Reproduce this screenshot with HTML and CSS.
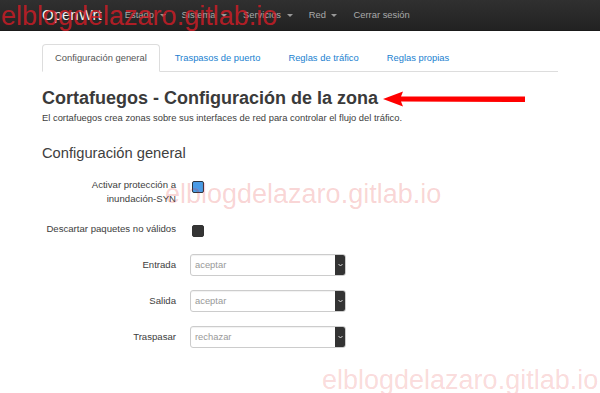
FILE: index.html
```html
<!DOCTYPE html>
<html lang="es">
<head>
  <meta charset="UTF-8" />
  <meta name="viewport" content="width=device-width, initial-scale=1.0"/>
  <title>OpenWrt - Cortafuegos</title>
  <link rel="stylesheet" href="styles.css">
</head>
<body>
  <!-- Top bar -->
  <header class="navbar">
    <div class="container nav-inner">
      <a class="brand" href="#">OpenWrt</a>
      <ul class="nav">
        <li><a href="#">Estado <b class="caret"></b></a></li>
        <li><a href="#">Sistema <b class="caret"></b></a></li>
        <li><a href="#">Servicios <b class="caret"></b></a></li>
        <li><a href="#">Red <b class="caret"></b></a></li>
        <li><a href="#">Cerrar sesión</a></li>
      </ul>
    </div>
  </header>

  <main class="container">
    <ul class="tabs">
      <li class="active"><a href="#">Configuración general</a></li>
      <li><a href="#">Traspasos de puerto</a></li>
      <li><a href="#">Reglas de tráfico</a></li>
      <li><a href="#">Reglas propias</a></li>
    </ul>

    <h2 class="page-title">
      Cortafuegos - Configuración de la zona
      <svg class="arrow" width="142" height="16" viewBox="0 0 142 16">
        <polygon points="0,8 20,0.5 18,5.5 142,5.5 142,11 18,10.5 20,15.5" fill="#ff0000"/>
      </svg>
    </h2>
    <p class="desc">El cortafuegos crea zonas sobre sus interfaces de red para controlar el flujo del tráfico.</p>

    <h3 class="section-title">Configuración general</h3>

    <div class="form">
      <div class="row row-check">
        <label class="label">Activar protección a<br>inundación-SYN</label>
        <input type="checkbox" class="check checked" checked>
      </div>
      <div class="row row-check">
        <label class="label">Descartar paquetes no válidos</label>
        <input type="checkbox" class="check">
      </div>
      <div class="row row-select">
        <label class="label">Entrada</label>
        <div class="select"><span class="value">aceptar</span><span class="select-btn"><svg width="5" height="4" viewBox="0 0 5 4"><polyline points="0.5,1 2.5,3 4.5,1" fill="none" stroke="#ddd" stroke-width="1"/></svg></span></div>
      </div>
      <div class="row row-select">
        <label class="label">Salida</label>
        <div class="select"><span class="value">aceptar</span><span class="select-btn"><svg width="5" height="4" viewBox="0 0 5 4"><polyline points="0.5,1 2.5,3 4.5,1" fill="none" stroke="#ddd" stroke-width="1"/></svg></span></div>
      </div>
      <div class="row row-select">
        <label class="label">Traspasar</label>
        <div class="select"><span class="value">rechazar</span><span class="select-btn"><svg width="5" height="4" viewBox="0 0 5 4"><polyline points="0.5,1 2.5,3 4.5,1" fill="none" stroke="#ddd" stroke-width="1"/></svg></span></div>
      </div>
    </div>
  </main>

  <!-- watermarks over the screenshot -->
  <div class="watermark wm-top">elblogdelazaro.gitlab.io</div>
  <div class="watermark wm-mid">elblogdelazaro.gitlab.io</div>
  <div class="watermark wm-bottom">elblogdelazaro.gitlab.io</div>
</body>
</html>
```

FILE: styles.css
```css
body {
  margin: 0;
  position: relative;
  height: 393px;
  overflow: hidden;
  background: #fff;
  font-family: 'Liberation Sans', Arial, sans-serif;
  font-size: 9.4px;
  color: #404040;
}

a {
  text-decoration: none;
}

.container {
  padding: 0 42px;
}

/* navbar */
.navbar {
  height: 31px;
  background: linear-gradient(#303030, #222);
  border-bottom: 1px solid #1a1a1a;
  box-sizing: border-box;
}

.nav-inner {
  display: flex;
  align-items: center;
  height: 100%;
}

.brand {
  font-size: 15px;
  color: #f2f2f2;
  margin-right: 15px;
  margin-top: -2px;
}

.nav {
  display: flex;
  list-style: none;
  margin: 0;
  padding: 0;
}

.nav a {
  display: block;
  padding: 0 8px;
  line-height: 30px;
  color: #aaa;
}

.caret {
  display: inline-block;
  width: 0;
  height: 0;
  margin-left: 3px;
  vertical-align: middle;
  border-top: 3px solid #999;
  border-left: 3px solid transparent;
  border-right: 3px solid transparent;
}

/* tabs */
.tabs {
  display: flex;
  list-style: none;
  margin: 13px 0 0;
  padding: 0;
  border-bottom: 1px solid #ddd;
}

.tabs li {
  margin-right: 2px;
  margin-bottom: -1px;
}

.tabs a {
  display: block;
  padding: 7px 12px;
  line-height: 12px;
  color: #1a7fd0;
  border: 1px solid transparent;
  border-radius: 4px 4px 0 0;
}

.tabs .active a {
  color: #555;
  background: #fff;
  border-color: #ddd;
  border-bottom-color: #fff;
}

/* headings */
.page-title {
  display: flex;
  align-items: center;
  margin: 16px 0 0;
  font-size: 18px;
  line-height: 20px;
  color: #3a3a3a;
}

.arrow {
  margin-left: 5px;
  margin-top: 1px;
}

.desc {
  margin: 3px 0 0;
  line-height: 13px;
  color: #404040;
}

.section-title {
  margin: 20px 0 0;
  font-size: 14.7px;
  font-weight: normal;
  line-height: 18px;
  color: #404040;
}

/* form */
.form {
  padding-top: 16px;
}

.row {
  display: flex;
  gap: 14px;
}

.row-check {
  align-items: flex-start;
  margin-bottom: 17px;
}

.row-select {
  align-items: center;
  margin-bottom: 14px;
}

.row-check + .row-select {
  margin-top: 2px;
}

.label {
  width: 134px;
  flex: none;
  text-align: right;
  font-size: 9.6px;
  line-height: 13.5px;
  color: #404040;
}

.check {
  appearance: none;
  -webkit-appearance: none;
  width: 12px;
  height: 12px;
  margin: 3px 0 0 1.5px;
  border: 1px solid #333;
  border-radius: 2px;
  background: #353535;
  box-sizing: border-box;
}

.check.checked {
  background: #4a9be6;
  border-color: #2e3640;
}

.select {
  display: flex;
  width: 156px;
  height: 22px;
  border: 1px solid #ccc;
  border-radius: 3px;
  box-sizing: border-box;
  box-shadow: inset 0 1px 1px rgba(0,0,0,0.06);
  overflow: hidden;
}

.select .value {
  flex: 1;
  padding-left: 4px;
  line-height: 20px;
  color: #999;
}

.select-btn {
  width: 10px;
  display: flex;
  align-items: center;
  justify-content: center;
  background: #333;
}

/* watermarks */
.watermark {
  position: absolute;
  font-family: 'Liberation Sans', Arial, sans-serif;
  font-size: 27px;
  line-height: 27px;
  white-space: nowrap;
  pointer-events: none;
}

.wm-top {
  left: 1px;
  top: 3px;
  color: rgba(214, 28, 38, 0.8);
}

.wm-mid {
  left: 165px;
  top: 181px;
  color: rgba(225, 40, 40, 0.2);
}

.wm-bottom {
  left: 322px;
  top: 367px;
  color: rgba(225, 40, 40, 0.18);
}
```
